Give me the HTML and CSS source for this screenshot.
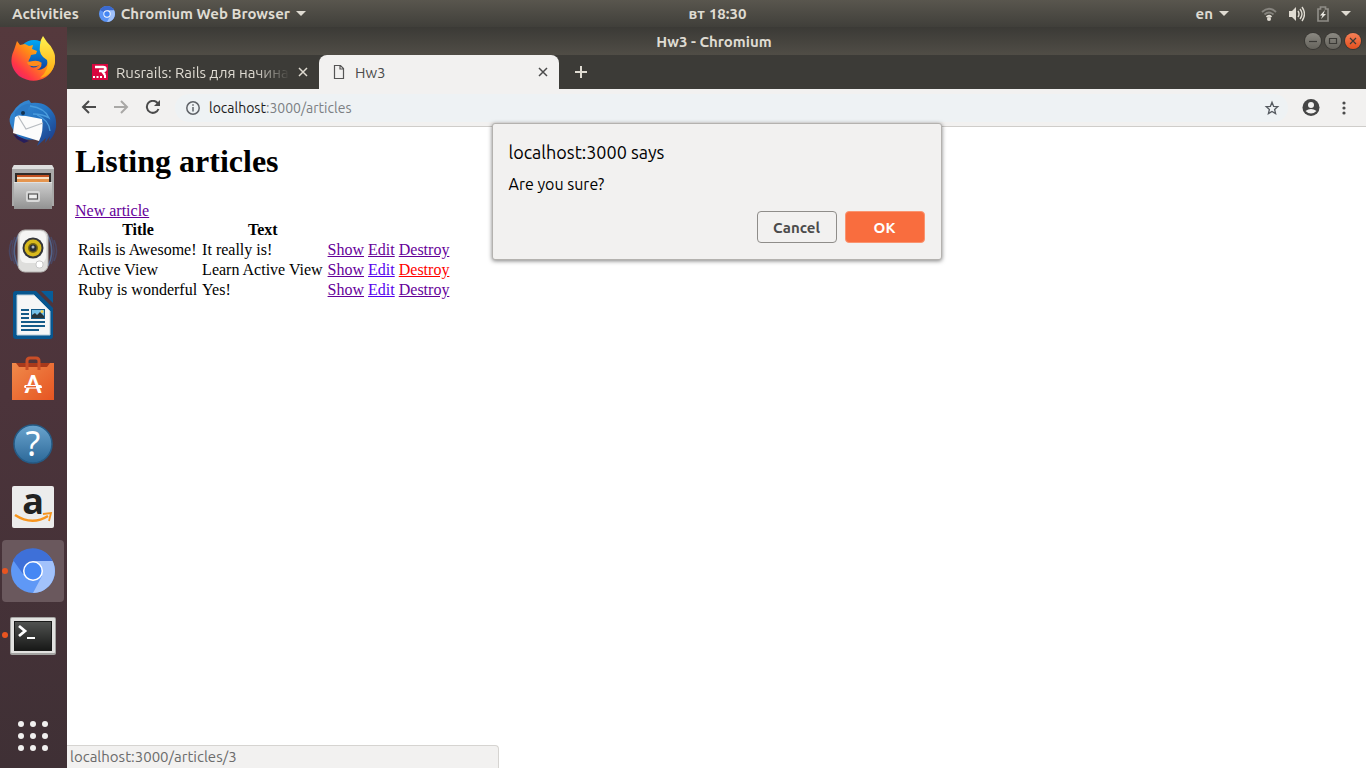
FILE: index.html
```html
<!DOCTYPE html>
<html lang="en">
<head>
<meta charset="utf-8">
<title>Hw3 - Chromium</title>
<link rel="stylesheet" href="styles.css">
</head>
<body>
<header class="topbar">
  <div class="topbar-left">
    <button class="top-button">Activities</button>
    <button class="top-button app-menu">
      <svg width="16" height="16" viewBox="0 0 44 44"><circle cx="22" cy="22" r="22" fill="#5b94f5"/><path d="M22 22 3 11A22 22 0 0 1 41 11z" fill="#3b6ad0"/><path d="M22 12H41.500A22 22 0 0 1 22 44L31 27z" fill="#9fc0fa"/><circle cx="22" cy="22" r="10" fill="#fff"/><circle cx="22" cy="22" r="7.500" fill="#4486f4"/></svg>
      Chromium Web Browser
      <span class="caret"></span>
    </button>
  </div>
  <button class="top-button clock"><span>вт</span> 18:30</button>
  <div class="topbar-right">
    <button class="top-button lang">en <span class="caret"></span></button>
    <button class="top-button tray" aria-label="System menu">
      <svg width="16" height="16" viewBox="0 0 16 16" fill="none" stroke-width="1.800"><path d="M1 6Q8-.5 15 6M3.500 8.500Q8 4.500 12.500 8.500" stroke="#86847e"/><path d="M5.500 11Q8 8.500 10.500 11" stroke="#dfdbd2"/><circle cx="8" cy="13" r="2" fill="#dfdbd2"/></svg>
      <svg width="16" height="16" viewBox="0 0 16 16"><path d="M0 5h3l4-4v14l-4-4H0z" fill="#dfdbd2"/><path d="M9 5q2 3 0 6M11 3q4 5 0 10M13 1q5 7 0 14" fill="none" stroke="#dfdbd2" stroke-width="1.400"/></svg>
      <svg width="12" height="16" viewBox="0 0 12 16"><path d="M1 3h2.500V1h5v2H11v12H1z" fill="none" stroke="#8e8c86" stroke-width="1.700"/><path d="M8 4 3 9.500h2.500L4 13l5-5H6.500z" fill="#eceae4"/></svg>
      <span class="caret"></span>
    </button>
  </div>
</header>
<div class="desktop">
  <nav class="dock" aria-label="Dock">
    <button class="launcher" aria-label="Firefox">
      <svg width="48" height="48" viewBox="0 0 48 48"><defs><linearGradient id="ff1" x1="1" y1="0" x2="0" y2="1"><stop offset="0" stop-color="#ffe226"/><stop offset=".45" stop-color="#ff8a16"/><stop offset=".75" stop-color="#ff3647"/><stop offset="1" stop-color="#e31587"/></linearGradient><linearGradient id="ff2" x1="0" y1="0" x2="0" y2="1"><stop offset="0" stop-color="#00a8f5"/><stop offset="1" stop-color="#103a9c"/></linearGradient><linearGradient id="ff3" x1="0" y1="0" x2="0" y2="1"><stop offset="0" stop-color="#fff44f"/><stop offset="1" stop-color="#ffa40f"/></linearGradient></defs><circle cx="25" cy="21" r="16" fill="url(#ff2)"/><path d="M8 6 11 10 16 9 20 11 24 10 23 14 28 16 27 19 22 20 21 23Q18 27 21 31Q24 34 29 31L32 28Q34 32 28 35Q37 35 39 27L45 17Q49 33 37 42Q24 50 10 41Q-2 30 5 15z" fill="url(#ff1)"/><path d="M18 27 24 26Q29 25 33 28Q29 32 23 31Q19 31 18 27" fill="#ff8b1b"/><path d="M34 1 38 7Q47 15 46 27Q44 40 31 43Q41 34 38 25Q29 20 31 10Q31 5 34 1" fill="url(#ff3)"/></svg>
    </button>
    <button class="launcher" aria-label="Thunderbird">
      <svg width="48" height="48" viewBox="0 0 48 48"><defs><linearGradient id="tb" x1="0" y1="0" x2="1" y2="1"><stop offset="0" stop-color="#3c91da"/><stop offset=".5" stop-color="#2474c2"/><stop offset="1" stop-color="#1b337f"/></linearGradient></defs><path d="M20 1 22 4Q39 2 46 17Q50 32 40 42L41 37 36 44 37 39 28 47 31 40Q12 43 7 35Q-4 21 4 13Q10 3 20 1" fill="url(#tb)"/><path d="M4 35 20 42 15 44 8 40z" fill="#271e5b"/><path d="M6 18Q10 15 17 17L33 20Q35 32 30 42L4 34z" fill="#fbfbfb"/><path d="m9 17 8 13 17-6" fill="none" stroke="#b7bbc0" stroke-width="1.200"/><path d="M6 13Q14 3 24 5Q17 8 19 15Q14 19 9 15L6 18z" fill="#2c7ac6"/><circle cx="14" cy="14" r="2" fill="#123252"/><path d="M21 7Q36 9 40 19 34 15 24 15M28 16Q40 21 41 32" fill="none" stroke="#4a9cdd" stroke-width="1.300"/></svg>
    </button>
    <button class="launcher" aria-label="Files">
      <svg width="48" height="48" viewBox="0 0 48 48"><defs><linearGradient id="fl" x1="0" y1="0" x2="0" y2="1"><stop offset="0" stop-color="#cfcfcf"/><stop offset="1" stop-color="#929292"/></linearGradient></defs><path d="M5 2h38l2 3v38H3V5z" fill="#a9a9a9"/><path d="M5 2h38l2 4H3z" fill="#dedede"/><path d="M6 10h36v10H6z" fill="#302b29"/><path d="M8 12h32v7H8z" fill="#c2501f"/><path d="M8 14h32v5H8z" fill="#f7dfc2"/><path d="M8 16h32v3H8z" fill="#e5954f"/><path d="M5 19h38v27H5z" fill="url(#fl)"/><path d="M5 19.500h38" stroke="#e1e1e1"/><rect x="17" y="28" width="14" height="11" rx="2" fill="#d9d9d9"/><rect x="19.500" y="31" width="9" height="5" fill="#eee" stroke="#555" stroke-width="1.200"/></svg>
    </button>
    <button class="launcher" aria-label="Rhythmbox">
      <svg width="48" height="48" viewBox="0 0 48 48" fill="none"><path d="M6 10Q0 23 6 37M3 13Q-2 24 3 34M42 10Q48 23 42 37M45 13Q50 24 45 34" stroke="#4a4763" stroke-width="1.600"/><path d="M10 7Q1 23 9 39M38 7Q47 23 39 39" stroke="#53658c" stroke-width="1.600"/><rect x="9" y="3" width="30" height="42" rx="7" fill="#dededc" stroke="#b6b4b2"/><rect x="11" y="4" width="26" height="32" rx="6" fill="#f5f5f4"/><circle cx="24" cy="21" r="10.500" fill="#34363a"/><circle cx="24" cy="21" r="8.500" fill="#d8b91d"/><circle cx="24" cy="21" r="5" fill="#786714"/><circle cx="24" cy="21" r="3.500" fill="#292d34"/><circle cx="24" cy="20" r="1.500" fill="#aeb5bf"/><rect x="27" y="34" width="7" height="7" rx="3" fill="#fff" stroke="#c9c9c9"/></svg>
    </button>
    <button class="launcher" aria-label="LibreOffice Writer">
      <svg width="48" height="48" viewBox="0 0 48 48"><path d="M7 0h20l17 17v28q0 3-3 3H7q-3 0-3-3V3q0-3 3-3z" fill="#07568f"/><path d="M32 0h12v12z" fill="#075d99"/><path d="M8 4h17l16 16v24H8z" fill="#f6f6f6" stroke="#b9cedb"/><g fill="#145a88"><path d="M12 18h8v2h-8zM12 22h8v2h-8zM12 26h8v2h-8zM12 30h24v2H12zM12 34h24v2H12zM12 38h18v2H12z"/><path d="M22 18h14v10H22z"/></g><path d="M23 19h12v8H23z" fill="#73bfe8"/><circle cx="33" cy="20.500" r="1.500" fill="#f3d04e"/><path d="m23 27 0-3 3-2 2 2 3-3 4 4v2z" fill="#26343b"/></svg>
    </button>
    <button class="launcher" aria-label="Ubuntu Software">
      <svg width="48" height="48" viewBox="0 0 48 48"><defs><linearGradient id="us" x1="0" y1="0" x2="1" y2="1"><stop offset="0" stop-color="#f08a4b"/><stop offset="1" stop-color="#e65522"/></linearGradient></defs><path d="M3 8h42v6H3z" fill="#a8391b"/><path d="M3 8h4l3 4h28l3-4h4v37H3z" fill="url(#us)"/><path d="M18 15V6q0-3 3-3h6q3 0 3 3v9" fill="none" stroke="#c94e27" stroke-width="3"/><text x="24" y="38" class="software-letter">A</text><path d="M16 30h15q2 0 2 3H16q-2-1 0-3" fill="#fff"/><path d="M17 31h10v1.500H17z" fill="#e96530"/></svg>
    </button>
    <button class="launcher" aria-label="Help">
      <svg width="48" height="48" viewBox="0 0 48 48"><defs><linearGradient id="hp" x1="0" y1="0" x2="0" y2="1"><stop offset="0" stop-color="#6aa4ce"/><stop offset="1" stop-color="#2c6898"/></linearGradient></defs><circle cx="24" cy="25" r="19" fill="url(#hp)" stroke="#255b86" stroke-width="1.500"/><text x="24" y="37" class="help-letter">?</text></svg>
    </button>
    <button class="launcher" aria-label="Amazon">
      <svg width="48" height="48" viewBox="0 0 48 48"><rect x="3" y="3" width="42" height="42" rx="2" fill="#ececec"/><text x="24" y="31" class="amazon-letter">a</text><path d="M6 32Q23 43 39 33" fill="none" stroke="#f7941d" stroke-width="2.600"/><path d="m34 31 8-1-2 8" fill="none" stroke="#f7941d" stroke-width="1.800"/></svg>
    </button>
    <button class="launcher active running" aria-label="Chromium">
      <svg width="48" height="48" viewBox="-2 -2 48 48"><circle cx="22" cy="22" r="22" fill="#5f98f6"/><path d="M22 22 12 25 2 11A22 22 0 0 1 41.500 12H22z" fill="#3e70d8"/><path d="M22 12H41.500A22 22 0 0 1 22 44L31 27z" fill="#a2c2fb"/><circle cx="22" cy="22" r="10" fill="#fff"/><circle cx="22" cy="22" r="8.500" fill="#4587f4"/></svg>
    </button>
    <button class="launcher running" aria-label="Terminal">
      <svg width="48" height="48" viewBox="0 0 48 48"><defs><linearGradient id="tm" x1="0" y1="0" x2="0" y2="1"><stop offset="0" stop-color="#505250"/><stop offset="1" stop-color="#181918"/></linearGradient></defs><rect x="1" y="6" width="46" height="38" rx="2" fill="#a4a4a2"/><rect x="2" y="7" width="44" height="35" rx="1" fill="#e2e2e0"/><rect x="5" y="10" width="38" height="30" fill="#191a19"/><rect x="6" y="11" width="36" height="28" fill="url(#tm)"/><path d="m10 15 6 5-6 5" fill="none" stroke="#fff" stroke-width="2.800"/><path d="M18 27h8" stroke="#fff" stroke-width="2"/></svg>
    </button>
    <button class="launcher show-apps" aria-label="Show Applications">
      <svg width="48" height="48" viewBox="0 0 48 48" fill="#f1f0ef"><circle cx="12" cy="12" r="3"/><circle cx="24" cy="12" r="3"/><circle cx="36" cy="12" r="3"/><circle cx="12" cy="24" r="3"/><circle cx="24" cy="24" r="3"/><circle cx="36" cy="24" r="3"/><circle cx="12" cy="36" r="3"/><circle cx="24" cy="36" r="3"/><circle cx="36" cy="36" r="3"/></svg>
    </button>
  </nav>
  <main class="window">
    <div class="titlebar">
      <span class="window-title">Hw3 - Chromium</span>
      <div class="window-controls">
        <button class="control" aria-label="Minimize"><svg width="16" height="16" viewBox="0 0 16 16"><path d="M4 8.500h8"/></svg></button>
        <button class="control" aria-label="Maximize"><svg width="16" height="16" viewBox="0 0 16 16"><path d="M4.500 5.500h7v5h-7z"/></svg></button>
        <button class="control close" aria-label="Close"><svg width="16" height="16" viewBox="0 0 16 16"><path d="m5 5 6 6m0-6-6 6"/></svg></button>
      </div>
    </div>
    <div class="tabstrip">
      <div class="tab">
        <svg width="16" height="16" viewBox="0 0 16 16"><path d="M0 0h16v16H0z" fill="#d9063f"/><path d="M3 3h8q2.500 0 2.500 2T11 7H7M10 7l3 4" fill="none" stroke="#fff" stroke-width="2.500"/><path d="M1 12h2v2H1zM4.500 12h2v2h-2zM8 12h2v2H8zM12 11h2v3h-2z" fill="#fff"/></svg>
        <span class="tab-title faded">Rusrails: Rails для начина</span>
        <button class="tab-close" aria-label="Close tab"><svg width="10" height="10" viewBox="0 0 10 10"><path d="m1 1 8 8m0-8-8 8"/></svg></button>
      </div>
      <div class="tab current">
        <svg width="16" height="16" viewBox="0 0 16 16" fill="none" stroke="#555" stroke-width="1.200"><path d="M3.500 1.500h6l3 3v10h-9zM9 1.500V5h3.500"/></svg>
        <span class="tab-title">Hw3</span>
        <button class="tab-close" aria-label="Close tab"><svg width="10" height="10" viewBox="0 0 10 10"><path d="m1 1 8 8m0-8-8 8"/></svg></button>
      </div>
      <button class="new-tab" aria-label="New tab"><svg width="12" height="12" viewBox="0 0 12 12"><path d="M6 0v12M0 6h12" stroke="#dfdbd2" stroke-width="2"/></svg></button>
    </div>
    <div class="toolbar">
      <button class="tool" aria-label="Back"><svg width="16" height="16" viewBox="0 0 16 16"><path d="M15 7H2M8 1 2 7l6 6"/></svg></button>
      <button class="tool disabled" aria-label="Forward"><svg width="16" height="16" viewBox="0 0 16 16"><path d="M1 7h13M8 1l6 6-6 6"/></svg></button>
      <button class="tool" aria-label="Reload"><svg width="16" height="16" viewBox="0 0 16 16"><path d="M13.500 9A6 6 0 1 1 12.500 3L14 5"/><path d="M15 0v6H9z" fill="#4b4b4b" stroke="none"/></svg></button>
      <div class="omnibox">
        <svg width="16" height="16" viewBox="0 0 16 16" fill="none" stroke="#5f6368" stroke-width="1.500"><circle cx="8" cy="8" r="6.200"/><path d="M8 7v4.500M8 4.300v1.500"/></svg>
        <a class="url" href="#articles">localhost<span>:3000/articles</span></a>
        <button class="star" aria-label="Bookmark this page"><svg width="16" height="16" viewBox="0 0 16 16"><path d="m8 2.300 1.600 4 4.200.3-3.200 2.800 1 4.200L8 11.400l-3.600 2.200 1-4.200-3.200-2.800 4.200-.3z" fill="none" stroke="#555a60" stroke-width="1.300"/></svg></button>
      </div>
      <button class="tool profile" aria-label="Profile"><svg width="18" height="18" viewBox="0 0 18 18"><circle cx="9" cy="8.500" r="8.500" fill="#454545" stroke="none"/><circle cx="9" cy="6" r="3" fill="#f2f1f0" stroke="none"/><path d="M3.500 12Q9 8 14.500 12Q9 17 3.500 12" fill="#f2f1f0" stroke="none"/></svg></button>
      <button class="tool" aria-label="Menu"><svg width="16" height="16" viewBox="0 0 16 16" fill="#4b4b4b" stroke="none"><circle cx="8" cy="3" r="1.600"/><circle cx="8" cy="8" r="1.600"/><circle cx="8" cy="13" r="1.600"/></svg></button>
    </div>
    <article class="page" id="articles">
      <h1>Listing articles</h1>
      <a href="#new">New article</a>
      <table>
        <thead><tr><th>Title</th><th>Text</th><th colspan="3"></th></tr></thead>
        <tbody>
          <tr><td>Rails is Awesome!</td><td>It really is!</td><td><a href="#show1">Show</a></td><td><a href="#edit1">Edit</a></td><td><a href="#destroy1">Destroy</a></td></tr>
          <tr><td>Active View</td><td>Learn Active View</td><td><a href="#show3">Show</a></td><td><a class="unvisited" href="#edit3">Edit</a></td><td><a class="pressed" href="#destroy3">Destroy</a></td></tr>
          <tr><td>Ruby is wonderful</td><td>Yes!</td><td><a href="#show4">Show</a></td><td><a class="unvisited" href="#edit4">Edit</a></td><td><a href="#destroy4">Destroy</a></td></tr>
        </tbody>
      </table>
    </article>
    <dialog class="alert" open aria-labelledby="alert-title">
      <h2 id="alert-title">localhost:3000 says</h2>
      <p>Are you sure?</p>
      <div class="alert-actions">
        <button class="cancel">Cancel</button>
        <button class="ok">OK</button>
      </div>
    </dialog>
    <div class="status">localhost:3000/articles/3</div>
  </main>
</div>
</body>
</html>
```
FILE: styles.css
```css
* { box-sizing: border-box; }

body {
  margin: 0;
  height: 100vh;
  display: flex;
  flex-direction: column;
  overflow: hidden;
  font-family: Ubuntu, "Noto Sans", sans-serif;
  font-size: 15px;
}

button {
  margin: 0;
  padding: 0;
  border: 0;
  background: none;
  font: inherit;
  color: inherit;
}

svg { display: block; flex: none; }

/* Top panel */
.topbar {
  display: grid;
  grid-template-columns: calc(50% + 7px) auto 1fr;
  align-items: center;
  height: 27px;
  padding: 0 15px 0 12px;
  background: linear-gradient(#59564e, #403f3a);
  color: #dfdbd2;
  font-weight: 600;
}

.topbar-left, .topbar-right, .top-button { display: flex; align-items: center; }
.topbar-left { gap: 20px; }
.topbar-right { justify-content: flex-end; gap: 32px; }
.top-button { gap: 6px; white-space: nowrap; line-height: 20px; }
.clock { gap: 4px; }
.tray { gap: 12px; }

.caret {
  border: 5px solid transparent;
  border-top-color: #dfdbd2;
  border-bottom: 0;
}

/* Desktop and dock */
.desktop { display: flex; flex: 1; min-height: 0; }

.dock {
  display: flex;
  flex-direction: column;
  align-items: center;
  gap: 2px;
  width: 67px;
  padding: 1px 3px 1px 2px;
  background: linear-gradient(#55393d, #4c343b 50%, #3f3035);
}

.launcher {
  position: relative;
  display: grid;
  place-items: center;
  width: 62px;
  height: 62px;
  border-radius: 4px;
}

.launcher.active { background: #6a585d; }

.launcher.running::before {
  content: "";
  position: absolute;
  left: 0;
  top: 28px;
  width: 6px;
  height: 6px;
  border-radius: 50%;
  background: #e95420;
}

.show-apps { margin-top: auto; }

.launcher svg { overflow: visible; }
.software-letter, .help-letter, .amazon-letter { text-anchor: middle; }
.software-letter { font: bold 24px Lato, sans-serif; fill: #fff; }
.help-letter { font: 34px "Noto Sans", sans-serif; fill: #fff; }
.amazon-letter { font: bold 36px "Open Sans", sans-serif; fill: #222; }

/* Browser frame */
.window {
  position: relative;
  display: flex;
  flex-direction: column;
  flex: 1;
  min-width: 0;
  background: #fff;
}

.titlebar {
  display: grid;
  grid-template-columns: 1fr auto 1fr;
  align-items: center;
  height: 28px;
  padding-right: 5px;
  background: linear-gradient(#3b3a36, #504d46);
  color: #dfdbd2;
  font-weight: 600;
}

.window-title { grid-column: 2; }
.window-controls { display: flex; justify-content: flex-end; gap: 4px; }

.control {
  width: 16px;
  height: 16px;
  border-radius: 50%;
  background: linear-gradient(#8b8982, #65635c);
  box-shadow: 0 0 0 1px #393834;
}

.control svg { fill: none; stroke: #3b3a36; stroke-width: 1.2; }
.control.close { background: linear-gradient(#f58057, #e5501e); }

.tabstrip {
  display: flex;
  height: 34px;
  padding-left: 12px;
  background: #3c3b37;
  color: #dfdbd2;
}

.tab {
  display: flex;
  align-items: center;
  gap: 8px;
  width: 240px;
  padding: 0 11px 0 13px;
}

.tab.current {
  padding-left: 12px;
  border-radius: 8px 8px 0 0;
  background: #f2f1f0;
  color: #4b4b4b;
}

.tab-title { flex: 1; min-width: 0; overflow: hidden; white-space: nowrap; }
.faded {
  -webkit-mask-image: linear-gradient(to right, #000 80%, transparent);
  mask-image: linear-gradient(to right, #000 80%, transparent);
}
.tab-close svg { fill: none; stroke: currentColor; stroke-width: 1.5; }
.new-tab { padding: 0 16px; }

.toolbar {
  display: flex;
  align-items: center;
  gap: 16px;
  height: 38px;
  padding: 0 14px;
  border-bottom: 1px solid #cfcdca;
  background: #f2f1f0;
}

.tool svg { fill: none; stroke: #4b4b4b; stroke-width: 2; }
.tool.disabled svg { stroke: #a9a8a6; }
.tool svg[fill] { fill: #4b4b4b; stroke: none; }

.omnibox {
  display: flex;
  align-items: center;
  flex: 1;
  gap: 8px;
  height: 28px;
  margin: 0 -2px;
  padding: 0 8px 0 10px;
  border-radius: 14px;
  background: #eef2f4;
  font-size: 14px;
}

.url { flex: 1; color: #1c1c1c; text-decoration: none; }
.url span { color: #7b7f83; }

/* Web page */
.page {
  flex: 1;
  padding: 16px 8px;
  font: 16px/16px "Liberation Serif", serif;
  color: #000;
}

.page h1 { margin: 0 0 23px; font-size: 32px; line-height: 37px; }
.page a { color: #609; }
.page a.unvisited { color: #50e; }
.page a.pressed { color: #f00; }
.page table { border-spacing: 2px; }
.page th, .page td { padding: 1px; }
.page td:nth-child(-n+2) { padding-right: 2px; }

/* Confirmation prompt */
.alert {
  position: absolute;
  top: 96px;
  left: 0;
  right: 0;
  width: 450px;
  margin: 0 auto;
  padding: 16px;
  border: 1px solid #b4b2af;
  border-radius: 3px;
  background: #f2f1f0;
  box-shadow: 0 1px 4px #00000080;
  color: #000;
}

.alert h2 { margin: 0; font-size: 18px; font-weight: 400; line-height: 25px; }
.alert p { margin: 8px 0 16px; font-size: 16px; line-height: 22px; }
.alert-actions { display: flex; justify-content: flex-end; gap: 8px; }

.alert-actions button {
  width: 80px;
  height: 32px;
  border: 1px solid #8f8d8a;
  border-radius: 4px;
  color: #4b4b4b;
  font-weight: 600;
}

.alert-actions .ok { border-color: #fa9470; background: #f96d3e; color: #fff; }

.status {
  position: absolute;
  left: 0;
  bottom: 0;
  width: 432px;
  padding: 0 3px;
  border: 1px solid #d6d4d1;
  border-width: 1px 1px 0 0;
  border-radius: 0 4px 0 0;
  background: #f2f1f0;
  color: #6b6b6b;
  line-height: 22px;
}
```
